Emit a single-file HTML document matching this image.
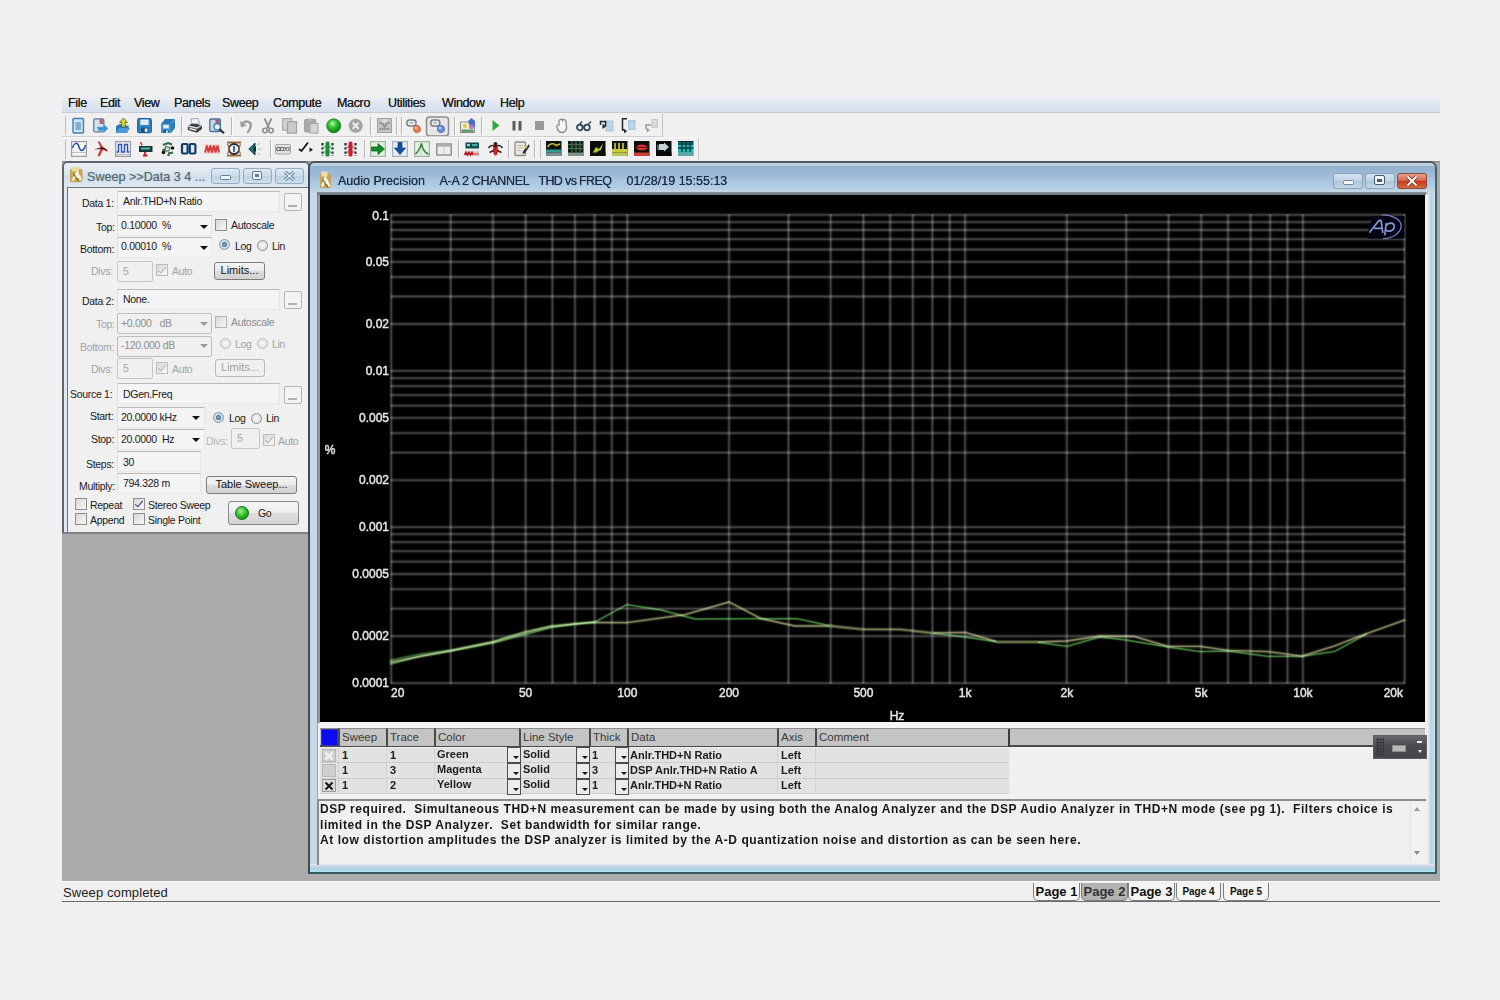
<!DOCTYPE html>
<html><head><meta charset="utf-8"><title>Audio Precision</title>
<style>
*{box-sizing:border-box;margin:0;padding:0}
html,body{width:1500px;height:1000px;overflow:hidden;background:#f0f0f0;font-family:"Liberation Sans",sans-serif;}
.a{position:absolute}
#menubar{left:62px;top:97px;width:1378px;height:16px;background:linear-gradient(#e9edf5,#dde4f0 60%,#d6deec);border-bottom:1px solid #c4cad6}
#menubar span{position:absolute;top:-0.7px;font-size:12.5px;color:#1c1c1c;line-height:14px;letter-spacing:-0.35px;text-shadow:0 0 0.6px #333}
#mdi{left:62px;top:161px;width:1378px;height:720px;background:#ababab;border-top:1px solid #8a8a8a}
.tbsep{position:absolute;width:1px;background:#b8b8b8;height:18px}
.ico{position:absolute;width:16px;height:16px}
/* sweep window */
#sw{left:62px;top:161px;width:248px;height:373px;background:#dfe8f0;border:2px solid #5e666c;border-bottom-color:#808284;border-radius:6px 6px 0 0}
#swtitle{left:0;top:0;width:244px;height:24px;border-radius:4px 4px 0 0;background:linear-gradient(#e9f0f6,#dbe6f0 45%,#d3e0ec 55%,#dce7f0)}
#swbody{left:3px;top:24px;width:241px;height:345px;background:#f0f0f0;border:0 solid #6c747a;border-width:1.5px 0 0 1.5px}
/* graph window */
#gw{left:308px;top:161px;width:1129px;height:712.5px;background:#c8d8e6;border:2px solid #3f4b56;border-top-color:#50565e;border-right-color:#466064;border-bottom-color:#325860;border-radius:7px 7px 0 0}
#gwtitle{left:0;top:0;width:1125px;height:30px;border-radius:5px 5px 0 0;background:linear-gradient(#c4d3e2 0%,#c0d0e0 8%,#93b2d0 11%,#9ab8d6 30%,#a5bdd6 50%,#a8c5e1 53%,#b4cfe6 86%,#c4d6e2 92%,#c4d6e2 100%)}
#black{left:320px;top:195px;width:1105px;height:527px;background:#000}
.lbl{position:absolute;font-size:10.5px;color:#1a1a1a;white-space:nowrap;line-height:12px;letter-spacing:-0.3px}
.dis{color:#a3a3a3}
.fld{position:absolute;background:#f4f4f4;border-top:1px solid #b9b9b9;border-left:1px solid #dedede;border-right:1px solid #e6e6e6;border-bottom:1px solid #e8e8e8}
.box{position:absolute;background:#f3f3f3;border:1px solid #b4b4b4;border-radius:2px}
.btn{position:absolute;border:1px solid #7c7c7c;border-radius:3px;background:linear-gradient(#f4f4f4,#ebebeb 48%,#dcdcdc 52%,#d2d2d2);font-size:11px;color:#111;text-align:center;white-space:nowrap}
.cb{position:absolute;width:12px;height:12px;border:1px solid #8f8f8f;background:linear-gradient(135deg,#d8d8d8,#f8f8f8)}
.rb{position:absolute;width:11px;height:11px;border:1px solid #8f8f8f;border-radius:50%;background:radial-gradient(#fafafa,#d6d6d6)}
.arr{position:absolute;width:0;height:0;border-left:4px solid transparent;border-right:4px solid transparent;border-top:4px solid #111}
#status{left:62px;top:881px;width:1378px;height:21px;background:#f0efee;border-top:1px solid #fbfbfb;border-bottom:1px solid #6c6c6c}
.tab{position:absolute;top:1px;height:18px;border:1px solid #7d7d7d;border-top:none;border-radius:0 0 5px 5px;background:#f4f4f2;font-weight:bold;color:#111;text-align:center;white-space:nowrap}
table{border-collapse:collapse}
.th{position:absolute;height:18px;background:#c4c4c4;border-left:2px solid #4a4a4a;border-top:1px solid #8c8c8c;font-size:11.5px;color:#3a3a3a;padding-left:2px;line-height:17px;white-space:nowrap}
.td{position:absolute;height:15px;font-size:11px;font-weight:bold;color:#1c1c1c;line-height:15px;white-space:nowrap;letter-spacing:0px}
.dd{position:absolute;width:14px;height:16px;border:1.5px solid #4c4c4c;background:#ececec}
.dd:after{content:"";position:absolute;left:4.5px;top:8px;border-left:3px solid transparent;border-right:3px solid transparent;border-top:3px solid #111}
</style></head><body>
<div class="a" id="menubar">
<span style="left:6px">File</span><span style="left:38px">Edit</span><span style="left:72px">View</span><span style="left:112px">Panels</span><span style="left:160px">Sweep</span><span style="left:211px">Compute</span><span style="left:275px">Macro</span><span style="left:326px">Utilities</span><span style="left:380px">Window</span><span style="left:438px">Help</span>
</div>
<!-- toolbars -->
<div class="a" id="tb1" style="left:62px;top:114px;width:600px;height:24px;border-bottom:1px solid #d4d4d4"></div>
<div class="a" id="tb2" style="left:62px;top:138px;width:660px;height:23px"></div>
<svg width="1500" height="170" style="position:absolute;left:0;top:0"><rect x="65" y="116" width="1" height="19" fill="#bdbdbd"/><rect x="65" y="140" width="1" height="19" fill="#bdbdbd"/><g transform="translate(72,118)"><rect x="1" y="0.5" width="10.5" height="14.5" rx="1" fill="#cfe3f2" stroke="#3f7fb0" stroke-width="1.4"/><rect x="3.5" y="4" width="5.5" height="8" fill="#7fb0d6"/></g><g transform="translate(93,118)"><rect x="0.8" y="0.8" width="10" height="13" rx="1" fill="#d6e4ee" stroke="#5b7f9c" stroke-width="1.3"/><rect x="6.5" y="1" width="4" height="5" fill="#b06a7a"/><path d="M4,9 L11,9 L11,6.5 L15,10.5 L11,14.5 L11,12 L6,13 Z" fill="#3b8fd0" stroke="#6fb2e2" stroke-width=".6"/></g><g transform="translate(115,118)"><path d="M1,8 L5,6 L14,8 L12,15 L1,15 Z" fill="#2f78b8"/><path d="M1,15 L4,10 L15,10 L12,15 Z" fill="#4c9ad6"/><path d="M8.5,0 L12.5,4.5 L10.3,4.5 L10.3,9 L6.7,9 L6.7,4.5 L4.5,4.5 Z" fill="#d9d62a" stroke="#55601a" stroke-width=".8"/></g><g transform="translate(137,118)"><rect x="0.7" y="0.7" width="13.6" height="14" rx="1.5" fill="#2f86c6" stroke="#1f5f96" stroke-width="1.2"/><rect x="3.3" y="1.5" width="8.4" height="5.5" fill="#dbeaf6"/><rect x="4" y="9.5" width="7.5" height="5" fill="#1d527f"/><rect x="7.8" y="10.5" width="2.6" height="3.4" fill="#e8f2fa"/></g><g transform="translate(160,118)"><path d="M1,6 L5,1 L15,1 L15,10 L11,15 L1,15 Z" fill="#2a78b4"/><path d="M1,6 L11,6 L11,15 L1,15 Z" fill="#3f93d0"/><rect x="3.2" y="6.8" width="5.6" height="3.6" fill="#dcebf6"/><rect x="3.5" y="12" width="5" height="3" fill="#1d527f"/><rect x="6" y="12.6" width="1.8" height="2.2" fill="#e8f2fa"/><path d="M11,6 L15,1" stroke="#8cc0e6" stroke-width=".8"/></g><rect x="181" y="117" width="1" height="18" fill="#b4b4b4"/><rect x="182" y="117" width="1" height="18" fill="#fbfbfb"/><g transform="translate(187,118)"><path d="M4,1 L11,0.5 L12.5,5 L5,6.5 Z" fill="#eef4f8" stroke="#7f9db5" stroke-width=".8"/><path d="M0.8,8 L5,5.5 L15,7 L15,11 L10,14.8 L0.8,12 Z" fill="#3a3d40"/><path d="M0.8,8 L10,10 L15,7" stroke="#d9dde0" stroke-width="1.3" fill="none"/><path d="M2.5,10.5 L9.5,12.3" stroke="#e8e8e8" stroke-width="1.6"/></g><g transform="translate(209,118)"><rect x="0.8" y="1" width="10.5" height="12.5" rx="1" fill="#c3d8e8" stroke="#41729a" stroke-width="1.3"/><rect x="6.5" y="1.5" width="4" height="4.5" fill="#a65a78"/><circle cx="8.2" cy="8.8" r="3.2" fill="#e4f2fb" stroke="#3a6f9c" stroke-width="1.2"/><path d="M10.5,11.2 L15,15.3" stroke="#2b2b33" stroke-width="2.2"/></g><rect x="231" y="117" width="1" height="18" fill="#b4b4b4"/><rect x="232" y="117" width="1" height="18" fill="#fbfbfb"/><g transform="translate(240,118)"><path d="M2,6.5 C5,1.5 12,3 10.5,9 C10,11.5 8.5,13.5 7,14.5" fill="none" stroke="#9c9c9c" stroke-width="2.4"/><path d="M0,3 L1,9.5 L7,7.5 Z" fill="#9c9c9c"/></g><g transform="translate(261,118)"><path d="M3.5,0.5 L8,10 M10.5,0.5 L6,10" stroke="#8f8f8f" stroke-width="1.8"/><circle cx="4" cy="12.5" r="2.2" fill="none" stroke="#8f8f8f" stroke-width="1.6"/><circle cx="10" cy="12.5" r="2.2" fill="none" stroke="#8f8f8f" stroke-width="1.6"/></g><g transform="translate(282,118)"><rect x="0.7" y="0.7" width="9" height="11.5" fill="#d2d2d2" stroke="#a9a9a9" stroke-width="1.2"/><rect x="5.5" y="3.7" width="9" height="11.5" fill="#c9c9c9" stroke="#a2a2a2" stroke-width="1.2"/></g><g transform="translate(304,118)"><rect x="0.7" y="1.5" width="11" height="12.5" rx="1" fill="#a9a9a9" stroke="#999" stroke-width="1"/><rect x="3.5" y="0.3" width="5" height="3" fill="#bdbdbd"/><rect x="6" y="5.5" width="8" height="9.7" fill="#d4d4d4" stroke="#a5a5a5" stroke-width="1"/></g><defs><radialGradient id="gb" cx="42%" cy="35%" r="65%"><stop offset="0" stop-color="#b4f7a2"/><stop offset=".45" stop-color="#2fc32f"/><stop offset="1" stop-color="#0b7d14"/></radialGradient></defs><circle cx="333.7" cy="125.8" r="7" fill="url(#gb)" stroke="#187a1c" stroke-width=".8"/><circle cx="355.7" cy="125.8" r="7" fill="#a3a3a3"/><path d="M352.7,122.8 L358.7,128.8 M358.7,122.8 L352.7,128.8" stroke="#ececec" stroke-width="2"/><rect x="370" y="117" width="1" height="18" fill="#b4b4b4"/><rect x="371" y="117" width="1" height="18" fill="#fbfbfb"/><g transform="translate(377,118)"><rect x="0.5" y="0.5" width="14" height="14" fill="#c4c4c4" stroke="#a2a2a2"/><path d="M2,5 L5,5 L7.5,9 L10,5 L13,5 M2,11 L13,11" stroke="#8e8e8e" stroke-width="1.6" fill="none"/><rect x="5" y="1.5" width="5" height="3" fill="#dcdcdc"/></g><rect x="396" y="117" width="1" height="18" fill="#b4b4b4"/><rect x="397" y="117" width="1" height="18" fill="#fbfbfb"/><rect x="401" y="117" width="1" height="18" fill="#b4b4b4"/><rect x="402" y="117" width="1" height="18" fill="#fbfbfb"/><g transform="translate(406,118)"><rect x="1" y="2" width="9" height="6" rx="2.5" fill="#eeeeee" stroke="#777f85" stroke-width="1.5"/><rect x="3.5" y="4" width="4" height="1.6" fill="#a9b2b8"/><circle cx="11" cy="11" r="3.6" fill="#e0805a" stroke="#b85c3c" stroke-width=".8"/><circle cx="10" cy="10" r="1.2" fill="#f6c0a6"/></g><rect x="426.5" y="117" width="22" height="19" rx="3" fill="#e6e6e6" stroke="#8c8c8c" stroke-width="1.5"/><g transform="translate(430,119)"><rect x="0.8" y="1" width="9" height="6" rx="2.5" fill="#eeeeee" stroke="#777f85" stroke-width="1.5"/><rect x="3.2" y="3" width="4" height="1.6" fill="#a9b2b8"/><circle cx="11" cy="10" r="3.6" fill="#6a8fe0" stroke="#4465b4" stroke-width=".8"/><circle cx="10" cy="9" r="1.2" fill="#c5d5f8"/></g><rect x="454" y="117" width="1" height="18" fill="#b4b4b4"/><rect x="455" y="117" width="1" height="18" fill="#fbfbfb"/><g transform="translate(460,118)"><rect x="0.5" y="4" width="14" height="10.5" fill="#f1ead0" stroke="#8d8f86" stroke-width="1"/><rect x="1.5" y="11.5" width="12" height="2.5" fill="#5aa06a"/><circle cx="5" cy="8" r="2" fill="#e2c64a"/><path d="M8,3 L11.5,0 L15,3 L15,9 L10,9 Z" fill="#4a6fd0"/><circle cx="11.5" cy="9" r="2.4" fill="#b878c8"/></g><rect x="481" y="117" width="1" height="18" fill="#b4b4b4"/><rect x="482" y="117" width="1" height="18" fill="#fbfbfb"/><path d="M492.5,120 L499.5,125.5 L492.5,131 Z" fill="#35a83a"/><rect x="512.5" y="121" width="3" height="9.5" fill="#5a5a5a"/><rect x="518.5" y="121" width="3" height="9.5" fill="#5a5a5a"/><rect x="535" y="121" width="9" height="9" fill="#989898"/><g transform="translate(556,118)"><path d="M3,7 L3,3.5 C3,1 6,0.5 6.5,2.5 C7.5,0.5 10,1.5 10,4 L10.5,8 C11,11 9.5,14.5 6.5,14.5 C3.5,14.5 1.5,12.5 0.8,9 C0.5,7.5 2,6.5 3,7 Z" fill="#f4f4f4" stroke="#8c8c8c" stroke-width="1.3"/></g><g transform="translate(576,118)"><circle cx="3.8" cy="9.5" r="2.8" fill="none" stroke="#2d4a5a" stroke-width="1.8"/><circle cx="11" cy="9.5" r="2.8" fill="none" stroke="#2d4a5a" stroke-width="1.8"/><path d="M6,8.5 L9,8.5 M3,7 L6,3.5 M11.5,7 L15,3.5" stroke="#2d4a5a" stroke-width="1.4"/></g><g transform="translate(599,118)"><rect x="7" y="3" width="7" height="10" fill="#b9d6e8" stroke="#9dc0d6" stroke-width=".8"/><path d="M6.5,8 L6.5,3.5 L1.5,3.5 L1.5,7" fill="none" stroke="#1f2630" stroke-width="1.5"/><path d="M3.5,5.5 L7,8.5 L3.5,11 Z" fill="#1f2630"/></g><g transform="translate(621,118)"><rect x="7.5" y="2.5" width="6.5" height="9" fill="#b9d6e8" stroke="#9dc0d6" stroke-width=".8"/><path d="M6,0.8 L1.5,0.8 L1.5,12 L3,12" fill="none" stroke="#1f2630" stroke-width="1.5"/><path d="M2.5,10.5 L6,13 L3.5,15.5 Z" fill="#1f2630"/></g><g transform="translate(644,118)"><rect x="8" y="1.5" width="5.5" height="8" fill="#d9d9d9" stroke="#c0c0c0" stroke-width=".8"/><path d="M7.5,7 L2,7 L2,11" fill="none" stroke="#9a9a9a" stroke-width="1.5"/><path d="M2,9.5 L6,12 L3,14.5 Z" fill="#9a9a9a"/></g><rect x="662" y="114" width="1" height="23" fill="#c4c4c4"/><rect x="62" y="136" width="600" height="1" fill="#cfcfcf"/><rect x="62" y="137" width="637" height="1" fill="#fafafa"/><g transform="translate(71,141)"><rect x="0.6" y="0.6" width="14.8" height="14.8" fill="#f6f6f6" stroke="#9c9c9c" stroke-width="1.2"/><path d="M1.5,7 C3.5,1 6.5,1 8,6 C9.5,11 12.5,11 14.5,4" fill="none" stroke="#1f4fa8" stroke-width="1.5"/><path d="M1,11.5 L15,11.5" stroke="#bdbdbd"/></g><g transform="translate(93,141)"><path d="M4.5,0.5 L8,7 L4.5,15 L6.5,15.5 L10,8.5 L14.5,11 L14,8.5 L9.5,5.5 L6.5,0.5 Z" fill="#d92a36"/><path d="M1,8.5 L9,6 L15,9.5 L8,8 Z" fill="#3a2024"/></g><g transform="translate(115,141)"><rect x="0.6" y="0.6" width="14.8" height="14.8" fill="#f1f1f4" stroke="#9c9ca4" stroke-width="1.2"/><path d="M1.5,11 L3.5,11 L3.5,3.5 L6.5,3.5 L6.5,11 L9.5,11 L9.5,3.5 L12.5,3.5 L12.5,11 L14.5,11" fill="none" stroke="#2a4fb0" stroke-width="1.4"/><path d="M1,13.5 L15,13.5" stroke="#b4b4c0"/></g><g transform="translate(138,141)"><rect x="1" y="5" width="13.5" height="6" fill="#0f3c3a"/><rect x="3" y="6.5" width="9" height="2" fill="#5ab8a8"/><path d="M2.5,1 L4,4.5" stroke="#c22" stroke-width="1.4"/><path d="M7,11 L7,15 M5,14.5 L9.5,14.5" stroke="#c41c2c" stroke-width="1.8"/></g><g transform="translate(160,141)"><path d="M3,4 L8,2 L12,3.5 M2.5,9.5 L6,8 M8,12.5 L13,11.5" stroke="#2c6a40" stroke-width="2" fill="none"/><circle cx="3.5" cy="11.5" r="1.8" fill="#111"/><circle cx="12.5" cy="7" r="1.8" fill="#111"/><path d="M5.5,5.5 L10,6.5 L9,10 L5,10 Z" fill="#d9eadf" stroke="#2c6a40" stroke-width="1"/><circle cx="8.5" cy="14" r="1.3" fill="#3d7f52"/></g><g transform="translate(181,141)"><rect x="1" y="3" width="5.6" height="9.5" rx="1" fill="#dfe9f2" stroke="#123f6a" stroke-width="2.2"/><rect x="8.8" y="3" width="5.6" height="9.5" rx="1" fill="#dfe9f2" stroke="#123f6a" stroke-width="2.2"/></g><g transform="translate(204,141)"><rect x="0.5" y="3" width="15" height="10" fill="#f3d4d4"/><path d="M1,11.5 L3,4.5 L4.5,11.5 L6.5,4.5 L8,11.5 L10,4.5 L11.5,11.5 L13.5,4.5 L15,11.5" fill="none" stroke="#d83a3e" stroke-width="1.9"/></g><g transform="translate(226,141)"><path d="M1,1.5 L15,1.5 M1,14.5 L15,14.5" stroke="#9a6a3a" stroke-width="1.8"/><circle cx="8" cy="8" r="5" fill="#f4f4f4" stroke="#2a2a33" stroke-width="1.8"/><path d="M8,5 L8,11" stroke="#2a5ab8" stroke-width="1.8"/><path d="M1.5,3 L3.5,8 L1.5,13 M14.5,3 L12.5,8 L14.5,13" stroke="#9a6a3a" stroke-width="1.2" fill="none"/></g><g transform="translate(248,141)"><path d="M0.8,8 L7,2 L7,14 Z" fill="#1f7a78" stroke="#15403f" stroke-width="1"/><rect x="5.5" y="5.5" width="2.5" height="5" fill="#0f2f2e"/><path d="M9.5,4 L12,2 M9.8,8 L13.5,8 M9.5,12 L12,14" stroke="#c8c8c8" stroke-width="1.3"/></g><rect x="270" y="140" width="1" height="18" fill="#b4b4b4"/><rect x="271" y="140" width="1" height="18" fill="#fbfbfb"/><g transform="translate(275,141)"><rect x="0.5" y="3.5" width="15" height="9.5" rx="1.5" fill="#e4e4e4" stroke="#a4a4a4" stroke-width="1"/><circle cx="3.5" cy="8" r="1.8" fill="none" stroke="#666" stroke-width="1.1"/><circle cx="7" cy="8" r="1.8" fill="none" stroke="#666" stroke-width="1.1"/><path d="M9.5,6 L12.5,10 M12.5,6 L9.5,10 M14,6 L14,10" stroke="#666" stroke-width="1.1"/></g><g transform="translate(298,141)"><path d="M1,8 L3.5,10 L10,1.5" fill="none" stroke="#1c1c1c" stroke-width="1.9"/><path d="M11.5,6.5 L15,8.8 L11.5,11 Z" fill="#1c1c1c"/></g><g transform="translate(320,141)"><rect x="5.5" y="0.5" width="4" height="15" rx="1.5" fill="#1f8a3a"/><path d="M2.5,2 L2.5,15 M12.5,2 L12.5,15" stroke="#16442a" stroke-width="2.2" stroke-dasharray="2.4 1.8"/><path d="M4,6 L11,6 M4,11 L11,11" stroke="#1f8a3a" stroke-width="1.2"/></g><g transform="translate(343,141)"><rect x="5.5" y="0.5" width="4" height="15" rx="1.5" fill="#cc1f2f"/><path d="M2.5,2 L2.5,15 M12.5,2 L12.5,15" stroke="#2c2c2c" stroke-width="2.2" stroke-dasharray="2.4 1.8"/><path d="M4,6 L11,6 M4,11 L11,11" stroke="#cc1f2f" stroke-width="1.2"/></g><rect x="364" y="140" width="1" height="18" fill="#b4b4b4"/><rect x="365" y="140" width="1" height="18" fill="#fbfbfb"/><g transform="translate(370,141)"><rect x="0.6" y="0.6" width="14.8" height="14.8" fill="#e2f0e2" stroke="#a9b4a9" stroke-width="1.2"/><path d="M1.5,6 L8,6 L8,2.5 L14.5,8 L8,13.5 L8,10 L1.5,10 Z" fill="#128a2c" stroke="#0c5a1c" stroke-width=".7"/></g><g transform="translate(392,141)"><rect x="0.6" y="0.6" width="14.8" height="14.8" fill="#e6eef6" stroke="#a9b0ba" stroke-width="1.2"/><path d="M6,1.5 L10,1.5 L10,7 L13.5,7 L8,13.5 L2.5,7 L6,7 Z" fill="#16509e" stroke="#0c346c" stroke-width=".7"/></g><g transform="translate(414,141)"><rect x="0.6" y="0.6" width="14.8" height="14.8" fill="#e4f1e2" stroke="#a4b0a4" stroke-width="1.2"/><path d="M7,1 L7,15" stroke="#bcd4bc"/><path d="M1.5,13 C5,10 6.5,6 7.5,2.5 C8.5,8 11,12 14.5,13" fill="none" stroke="#3f7f4a" stroke-width="1.5"/></g><g transform="translate(436,141)"><rect x="0.8" y="3" width="14.4" height="11" fill="#ededed" stroke="#8c8c8c" stroke-width="1.4"/><rect x="1.5" y="3.5" width="13" height="2.2" fill="#b0b0b0"/><path d="M8,6 L8,13.5" stroke="#c8c8c8"/></g><rect x="458" y="140" width="1" height="18" fill="#b4b4b4"/><rect x="459" y="140" width="1" height="18" fill="#fbfbfb"/><g transform="translate(464,141)"><rect x="1.5" y="1.5" width="13.5" height="6" fill="#0f4a4c"/><rect x="3" y="3" width="3" height="2.2" fill="#8fd8d0"/><rect x="8" y="3" width="5.5" height="2.2" fill="#48a8a0"/><rect x="0.5" y="9.5" width="15" height="1.6" fill="#d8d8d8"/><path d="M0.5,14 L2,11.5 L3.5,14 L5,11.5 L6.5,14 L8,11.5 L9.5,14" stroke="#b8141c" stroke-width="1.7" fill="none"/><rect x="10" y="11.5" width="5" height="3" fill="#d08a8a"/></g><g transform="translate(488,141)"><ellipse cx="7.5" cy="9" rx="2.6" ry="5.5" fill="#d4202c"/><circle cx="7.5" cy="3" r="2" fill="#3a1c1c"/><path d="M0.5,7 C3,3.5 5,4 7.5,6 C10,4 12,3.5 14.5,7 M1.5,11.5 L5.5,9.5 M13.5,11.5 L9.5,9.5" fill="none" stroke="#3a1c1c" stroke-width="1.4"/></g><rect x="508" y="140" width="1" height="18" fill="#b4b4b4"/><rect x="509" y="140" width="1" height="18" fill="#fbfbfb"/><g transform="translate(514,141)"><rect x="1" y="1" width="10.5" height="13.5" rx="1" fill="#e9e9df" stroke="#8c8c84" stroke-width="1.3"/><path d="M3,4.5 L9,4.5 M3,7 L9,7 M3,9.5 L7,9.5" stroke="#b9b9ae" stroke-width="1"/><path d="M15,3 L9,10.5 L8.5,13 L11,12 L15.5,5.5 Z" fill="#2a2a2a"/><path d="M10,5 L13,7" stroke="#d8d04a" stroke-width="1.5"/></g><rect x="534" y="140" width="1" height="18" fill="#b4b4b4"/><rect x="535" y="140" width="1" height="18" fill="#fbfbfb"/><rect x="540" y="140" width="1" height="19" fill="#bdbdbd"/><g transform="translate(546,141)"><rect x="0" y="0" width="15.5" height="15" fill="#0d1410"/><path d="M1.5,6 C4,2 8,2 10,4.5 L14,3" stroke="#c9b83a" stroke-width="1.6" fill="none"/><rect x="0" y="8.5" width="15.5" height="3" fill="#2f9a90"/><rect x="0" y="11.5" width="15.5" height="3.5" fill="#7d8d92"/></g><g transform="translate(568,141)"><rect x="0" y="0" width="15.5" height="15" fill="#101a12"/><path d="M0,3.5 L15.5,3.5 M0,7.5 L15.5,7.5 M4,0 L4,11 M8,0 L8,11 M12,0 L12,11" stroke="#3f6a48" stroke-width="1.3"/><rect x="0" y="11.5" width="15.5" height="3.5" fill="#7d9486"/></g><g transform="translate(590,141)"><rect x="0" y="0" width="15.5" height="15" fill="#0b0b08"/><path d="M2,13 L6,6 L9,8 L13,2.5 L11,9 L8,10 L6,14 Z" fill="#b5c43a"/><rect x="0" y="11.5" width="15.5" height="3.5" fill="#111108"/></g><g transform="translate(612,141)"><rect x="0" y="0" width="15.5" height="15" fill="#14140a"/><path d="M3,2 L3,8 M7,2 L7,8 M11,2 L11,8" stroke="#d8d23a" stroke-width="1.6"/><rect x="0" y="8" width="15.5" height="3.5" fill="#c8cc3c"/><rect x="0" y="11.5" width="15.5" height="3.5" fill="#b9c65a"/></g><g transform="translate(634,141)"><rect x="0" y="0" width="15.5" height="15" fill="#160c08"/><ellipse cx="7.8" cy="6.5" rx="5.5" ry="3" fill="#d4342c"/><path d="M2,6.5 L13.5,6.5" stroke="#5a1410" stroke-width="1"/><rect x="0" y="11.5" width="15.5" height="3.5" fill="#c8403a"/></g><g transform="translate(656,141)"><rect x="0" y="0" width="15.5" height="15" fill="#070b0d"/><path d="M3,3 L8,3 L8,1.5 L13,6 L8,10.5 L8,9 L3,9 Z" fill="#c6d0d2"/><path d="M2,4 L2,9" stroke="#5f8a8a" stroke-width="1.5"/><rect x="0" y="11.5" width="15.5" height="3.5" fill="#070b0d"/></g><g transform="translate(678,141)"><rect x="0" y="0" width="15.5" height="15" fill="#1fb8b4"/><path d="M0,3 L15.5,3 M0,7 L15.5,7 M4,0 L4,11 M8,0 L8,11 M12,0 L12,11" stroke="#0a3a3c" stroke-width="1.4"/><rect x="0" y="0" width="15.5" height="1.5" fill="#0a2a2c"/><rect x="0" y="11.5" width="15.5" height="3.5" fill="#62a8a8"/></g><rect x="698" y="138" width="1" height="22" fill="#c8c8c8"/></svg>
<div class="a" id="mdi"></div>
<!-- sweep window -->
<div class="a" id="sw"><div class="a" id="swtitle"></div><div class="a" id="swbody"></div></div>
<!-- sweep title -->
<svg class="a" style="left:69px;top:166px" width="14.5" height="18" viewBox="0 0 16 20"><rect x="1" y="3" width="14" height="15" rx="2" fill="#c9a85a"/><rect x="3" y="1" width="8" height="5" fill="#e9d9a0"/><path d="M4,16 L9,7 L13,16 M7,12 L13,12" stroke="#fffbe8" stroke-width="2.2" fill="none"/><path d="M5,9 L11,17" stroke="#7a5a22" stroke-width="1.2"/></svg>
<span class="a" style="left:87px;top:169.7px;font-size:12.6px;color:#55656e;letter-spacing:0px;white-space:nowrap;text-shadow:0 0 1px #8aa">Sweep &gt;&gt;Data 3 4 ...</span>
<div class="a wb" style="left:211px;top:168px;width:29px;height:16px"></div>
<div class="a wb" style="left:243px;top:168px;width:29px;height:16px"></div>
<div class="a wb" style="left:275px;top:168px;width:29px;height:16px"></div>
<div class="a" style="left:220px;top:175px;width:11px;height:5px;border:1.5px solid #5f7f95;border-radius:1.5px;background:#eef4f8"></div>
<div class="a" style="left:252px;top:171px;width:10px;height:9px;border:1.5px solid #5f7f95;border-radius:2px;background:#eef4f8"></div>
<div class="a" style="left:255px;top:174px;width:4px;height:3px;background:#5f7f95"></div>
<svg class="a" style="left:283px;top:170px" width="13" height="12"><path d="M2,2 L11,10 M11,2 L2,10" stroke="#5f7f95" stroke-width="3.2"/><path d="M2,2 L11,10 M11,2 L2,10" stroke="#eef4f8" stroke-width="1.2"/></svg>
<style>.wb{border:1px solid #93adc2;border-radius:3px;background:linear-gradient(#dfeaf4,#c9dbea 50%,#bdd2e4 52%,#cfdfec)}</style>

<!-- Data 1 -->
<span class="lbl" style="left:82px;top:197px">Data 1:</span>
<div class="fld" style="left:117px;top:191px;width:163px;height:21px"></div>
<span class="lbl" style="left:123px;top:195px">Anlr.THD+N Ratio</span>
<div class="box" style="left:284px;top:193px;width:18px;height:18px"></div><div class="a" style="left:288px;top:205px;width:9px;height:2px;background:#b0b0b0"></div>
<span class="lbl" style="left:96px;top:221px">Top:</span>
<div class="fld" style="left:117px;top:215px;width:95px;height:21px"></div>
<span class="lbl" style="left:121px;top:219px">0.10000&nbsp; %</span><div class="arr" style="left:200px;top:225px"></div>
<div class="cb" style="left:215px;top:219px"></div><span class="lbl" style="left:231px;top:219px">Autoscale</span>
<span class="lbl" style="left:80px;top:243px">Bottom:</span>
<div class="fld" style="left:117px;top:237px;width:95px;height:21px"></div>
<span class="lbl" style="left:121px;top:240px">0.00010&nbsp; %</span><div class="arr" style="left:200px;top:246px"></div>
<div class="rb on" style="left:219px;top:239px"></div><span class="lbl" style="left:235px;top:240px">Log</span>
<div class="rb" style="left:257px;top:240px"></div><span class="lbl" style="left:272px;top:240px">Lin</span>
<span class="lbl dis" style="left:91px;top:265px">Divs:</span>
<div class="box" style="left:117px;top:261px;width:36px;height:21px;background:#f0f0f0;border-color:#c6c6c6"></div><span class="lbl dis" style="left:123px;top:265px">5</span>
<div class="cb ck disc" style="left:156px;top:264px"></div><span class="lbl dis" style="left:172px;top:265px">Auto</span>
<div class="btn" style="left:214px;top:262px;width:51px;height:18px;line-height:15px">Limits...</div>
<!-- Data 2 -->
<span class="lbl" style="left:82px;top:295px">Data 2:</span>
<div class="fld" style="left:117px;top:289px;width:163px;height:21px"></div>
<span class="lbl" style="left:123px;top:293px">None.</span>
<div class="box" style="left:284px;top:291px;width:18px;height:18px"></div><div class="a" style="left:288px;top:303px;width:9px;height:2px;background:#b0b0b0"></div>
<span class="lbl dis" style="left:96px;top:318px">Top:</span>
<div class="box" style="left:117px;top:313px;width:95px;height:21px;background:#f0f0f0;border-color:#bdbdbd"></div>
<span class="lbl dis" style="left:121px;top:317px;color:#8e8e8e">+0.000&nbsp;&nbsp; dB</span><div class="arr" style="left:200px;top:322px;border-top-color:#9a9a9a"></div>
<div class="cb" style="left:215px;top:316px;border-color:#b5b5b5"></div><span class="lbl dis" style="left:231px;top:316px;color:#8e8e8e">Autoscale</span>
<span class="lbl dis" style="left:80px;top:341px">Bottom:</span>
<div class="box" style="left:117px;top:336px;width:95px;height:21px;background:#f0f0f0;border-color:#bdbdbd"></div>
<span class="lbl dis" style="left:121px;top:339px;color:#8e8e8e">-120.000 dB</span><div class="arr" style="left:200px;top:344px;border-top-color:#9a9a9a"></div>
<div class="rb" style="left:220px;top:338px;border-color:#bdbdbd"></div><span class="lbl dis" style="left:235px;top:338px">Log</span>
<div class="rb" style="left:257px;top:338px;border-color:#bdbdbd"></div><span class="lbl dis" style="left:272px;top:338px">Lin</span>
<span class="lbl dis" style="left:91px;top:363px">Divs:</span>
<div class="box" style="left:117px;top:358px;width:36px;height:21px;background:#f0f0f0;border-color:#c6c6c6"></div><span class="lbl dis" style="left:123px;top:362px">5</span>
<div class="cb ck disc" style="left:156px;top:362px"></div><span class="lbl dis" style="left:172px;top:363px">Auto</span>
<div class="btn" style="left:215px;top:359px;width:50px;height:18px;line-height:15px;color:#a0a0a0;border-color:#b9b9b9;background:#f0f0f0">Limits...</div>
<!-- Source 1 -->
<span class="lbl" style="left:70px;top:388px">Source 1:</span>
<div class="fld" style="left:117px;top:383px;width:163px;height:21px"></div>
<span class="lbl" style="left:123px;top:388px">DGen.Freq</span>
<div class="box" style="left:284px;top:386px;width:18px;height:18px"></div><div class="a" style="left:288px;top:398px;width:9px;height:2px;background:#b0b0b0"></div>
<span class="lbl" style="left:90px;top:410px">Start:</span>
<div class="fld" style="left:117px;top:407px;width:88px;height:21px"></div>
<span class="lbl" style="left:121px;top:411px">20.0000 kHz</span><div class="arr" style="left:192px;top:416px"></div>
<div class="rb on" style="left:213px;top:412px"></div><span class="lbl" style="left:229px;top:412px">Log</span>
<div class="rb" style="left:251px;top:413px"></div><span class="lbl" style="left:266px;top:412px">Lin</span>
<span class="lbl" style="left:91px;top:433px">Stop:</span>
<div class="fld" style="left:117px;top:429px;width:88px;height:21px"></div>
<span class="lbl" style="left:121px;top:433px">20.0000&nbsp; Hz</span><div class="arr" style="left:192px;top:438px"></div>
<span class="lbl dis" style="left:206px;top:435px;color:#b5b5b5">Divs:</span>
<div class="box" style="left:231px;top:428px;width:29px;height:21px;background:#f0f0f0;border-color:#c6c6c6"></div><span class="lbl dis" style="left:237px;top:432px">5</span>
<div class="cb ck disc" style="left:263px;top:434px"></div><span class="lbl dis" style="left:278px;top:435px">Auto</span>
<span class="lbl" style="left:86px;top:458px">Steps:</span>
<div class="fld" style="left:117px;top:451px;width:84px;height:21px"></div>
<span class="lbl" style="left:123px;top:456px">30</span>
<span class="lbl" style="left:79px;top:480px">Multiply:</span>
<div class="fld" style="left:117px;top:473px;width:84px;height:21px"></div>
<span class="lbl" style="left:123px;top:477px">794.328 m</span>
<div class="btn" style="left:206px;top:476px;width:91px;height:18px;line-height:15px">Table Sweep...</div>
<div class="cb" style="left:75px;top:498px"></div><span class="lbl" style="left:90px;top:499px">Repeat</span>
<div class="cb ck" style="left:133px;top:498px"></div><span class="lbl" style="left:148px;top:499px">Stereo Sweep</span>
<div class="cb" style="left:75px;top:513px"></div><span class="lbl" style="left:90px;top:514px">Append</span>
<div class="cb" style="left:133px;top:513px"></div><span class="lbl" style="left:148px;top:514px">Single Point</span>
<div class="btn" style="left:228px;top:501px;width:71px;height:24px;border-color:#8a8a8a;background:linear-gradient(#f6f6f6,#ededed 48%,#dedede 52%,#d4d4d4)"></div>
<div class="a" style="left:235px;top:506px;width:14px;height:14px;border-radius:50%;background:radial-gradient(circle at 40% 35%,#9cf08a,#22b422 55%,#0c7a12);border:1px solid #1c6a1c"></div>
<span class="lbl" style="left:258px;top:507px">Go</span>
<style>
.rb.on:after{content:"";position:absolute;left:2px;top:2px;width:5px;height:5px;border-radius:50%;background:radial-gradient(#8fb6cc,#234a63)}
.rb.on{background:radial-gradient(#e8f2f8,#b8cfdc);border-color:#7f9aac}
.cb.ck:after{content:"";position:absolute;left:3px;top:0px;width:3px;height:7px;border-right:1.5px solid #2a3f78;border-bottom:1.5px solid #2a3f78;transform:rotate(40deg)}
.cb.disc{border-color:#bcbcbc}.cb.disc:after{border-color:#b0b0b0}
</style>

<!-- graph window -->
<div class="a" id="gw"><div class="a" id="gwtitle"></div>
<div class="a" style="left:1118px;top:30px;width:7px;height:679px;background:linear-gradient(90deg,#e4eaf6,#bcd0e2 45%,#c0dff0 92%)"></div><div class="a" style="left:0;top:701px;width:1125px;height:7.5px;background:linear-gradient(#e8e8f4,#c2d2e2 35%,#aed6e4 65%,#b0e2ee 92%)"></div><div class="a" style="left:7px;top:30px;width:1111px;height:671px;background:#f0f0f0;border:1px solid #9aa4ac;border-right:none;border-bottom:none"></div>
</div>
<div class="a" id="black"></div>
<svg width="1500" height="1000" style="position:absolute;left:0;top:0;will-change:transform"><g fill="none"><path d="M391.2,214.4V683.6M450.68,214.4V683.6M492.89,214.4V683.6M525.62,214.4V683.6M552.37,214.4V683.6M574.99,214.4V683.6M594.58,214.4V683.6M611.86,214.4V683.6M627.31,214.4V683.6M729.0,214.4V683.6M788.48,214.4V683.6M830.69,214.4V683.6M863.42,214.4V683.6M890.17,214.4V683.6M912.79,214.4V683.6M932.38,214.4V683.6M949.66,214.4V683.6M965.11,214.4V683.6M1066.8,214.4V683.6M1126.28,214.4V683.6M1168.49,214.4V683.6M1201.22,214.4V683.6M1227.97,214.4V683.6M1250.59,214.4V683.6M1270.18,214.4V683.6M1287.46,214.4V683.6M1302.91,214.4V683.6M1404.6,214.4V683.6" stroke="#0c0c0c" stroke-width="4.6"/><path d="M391.2,214.4V683.6M450.68,214.4V683.6M492.89,214.4V683.6M525.62,214.4V683.6M552.37,214.4V683.6M574.99,214.4V683.6M594.58,214.4V683.6M611.86,214.4V683.6M627.31,214.4V683.6M729.0,214.4V683.6M788.48,214.4V683.6M830.69,214.4V683.6M863.42,214.4V683.6M890.17,214.4V683.6M912.79,214.4V683.6M932.38,214.4V683.6M949.66,214.4V683.6M965.11,214.4V683.6M1066.8,214.4V683.6M1126.28,214.4V683.6M1168.49,214.4V683.6M1201.22,214.4V683.6M1227.97,214.4V683.6M1250.59,214.4V683.6M1270.18,214.4V683.6M1287.46,214.4V683.6M1302.91,214.4V683.6M1404.6,214.4V683.6" stroke="#242424" stroke-width="2.8"/><path d="M391.2,214.4V683.6M450.68,214.4V683.6M492.89,214.4V683.6M525.62,214.4V683.6M552.37,214.4V683.6M574.99,214.4V683.6M594.58,214.4V683.6M611.86,214.4V683.6M627.31,214.4V683.6M729.0,214.4V683.6M788.48,214.4V683.6M830.69,214.4V683.6M863.42,214.4V683.6M890.17,214.4V683.6M912.79,214.4V683.6M932.38,214.4V683.6M949.66,214.4V683.6M965.11,214.4V683.6M1066.8,214.4V683.6M1126.28,214.4V683.6M1168.49,214.4V683.6M1201.22,214.4V683.6M1227.97,214.4V683.6M1250.59,214.4V683.6M1270.18,214.4V683.6M1287.46,214.4V683.6M1302.91,214.4V683.6M1404.6,214.4V683.6" stroke="#414141" stroke-width="1.3"/></g><g fill="none" style="mix-blend-mode:screen"><path d="M390.7,214.9H1405.1M390.7,222.04H1405.1M390.7,230.02H1405.1M390.7,239.08H1405.1M390.7,249.52H1405.1M390.7,261.88H1405.1M390.7,277.01H1405.1M390.7,296.5H1405.1M390.7,323.99H1405.1M390.7,370.97H1405.1M390.7,378.11H1405.1M390.7,386.09H1405.1M390.7,395.14H1405.1M390.7,405.59H1405.1M390.7,417.95H1405.1M390.7,433.07H1405.1M390.7,452.57H1405.1M390.7,480.05H1405.1M390.7,527.03H1405.1M390.7,534.17H1405.1M390.7,542.16H1405.1M390.7,551.21H1405.1M390.7,561.66H1405.1M390.7,574.01H1405.1M390.7,589.14H1405.1M390.7,608.64H1405.1M390.7,636.12H1405.1M390.7,683.1H1405.1" stroke="#0c0c0c" stroke-width="4.6"/><path d="M390.7,214.9H1405.1M390.7,222.04H1405.1M390.7,230.02H1405.1M390.7,239.08H1405.1M390.7,249.52H1405.1M390.7,261.88H1405.1M390.7,277.01H1405.1M390.7,296.5H1405.1M390.7,323.99H1405.1M390.7,370.97H1405.1M390.7,378.11H1405.1M390.7,386.09H1405.1M390.7,395.14H1405.1M390.7,405.59H1405.1M390.7,417.95H1405.1M390.7,433.07H1405.1M390.7,452.57H1405.1M390.7,480.05H1405.1M390.7,527.03H1405.1M390.7,534.17H1405.1M390.7,542.16H1405.1M390.7,551.21H1405.1M390.7,561.66H1405.1M390.7,574.01H1405.1M390.7,589.14H1405.1M390.7,608.64H1405.1M390.7,636.12H1405.1M390.7,683.1H1405.1" stroke="#242424" stroke-width="2.8"/><path d="M390.7,214.9H1405.1M390.7,222.04H1405.1M390.7,230.02H1405.1M390.7,239.08H1405.1M390.7,249.52H1405.1M390.7,261.88H1405.1M390.7,277.01H1405.1M390.7,296.5H1405.1M390.7,323.99H1405.1M390.7,370.97H1405.1M390.7,378.11H1405.1M390.7,386.09H1405.1M390.7,395.14H1405.1M390.7,405.59H1405.1M390.7,417.95H1405.1M390.7,433.07H1405.1M390.7,452.57H1405.1M390.7,480.05H1405.1M390.7,527.03H1405.1M390.7,534.17H1405.1M390.7,542.16H1405.1M390.7,551.21H1405.1M390.7,561.66H1405.1M390.7,574.01H1405.1M390.7,589.14H1405.1M390.7,608.64H1405.1M390.7,636.12H1405.1M390.7,683.1H1405.1" stroke="#414141" stroke-width="1.3"/></g><g style="mix-blend-mode:screen"><g fill="none" stroke-linejoin="round" stroke-linecap="round" style="mix-blend-mode:screen"><polyline points="391,664 420,656 451,651 493,643 525,634.5 551,627.5 576,624 595,622 627,604.6 661,610 695,619 797,618.6 831,626" stroke="#070d06" stroke-width="4.6"/><polyline points="391,664 420,656 451,651 493,643 525,634.5 551,627.5 576,624 595,622 627,604.6 661,610 695,619 797,618.6 831,626" stroke="#172e15" stroke-width="2.7"/><polyline points="391,664 420,656 451,651 493,643 525,634.5 551,627.5 576,624 595,622 627,604.6 661,610 695,619 797,618.6 831,626" stroke="#3f7a3a" stroke-width="1.3"/></g><g fill="none" stroke-linejoin="round" stroke-linecap="round" style="mix-blend-mode:screen"><polyline points="932,633 965,637 998,642" stroke="#070d06" stroke-width="4.6"/><polyline points="932,633 965,637 998,642" stroke="#172e15" stroke-width="2.7"/><polyline points="932,633 965,637 998,642" stroke="#3f7a3a" stroke-width="1.3"/></g><g fill="none" stroke-linejoin="round" stroke-linecap="round" style="mix-blend-mode:screen"><polyline points="1036,642 1067,646.4 1100,637 1126,640 1168,647 1200,651.6 1228,651 1268,656.4 1302,656.4 1334.8,651.4 1352.4,641.8 1366,634.2" stroke="#070d06" stroke-width="4.6"/><polyline points="1036,642 1067,646.4 1100,637 1126,640 1168,647 1200,651.6 1228,651 1268,656.4 1302,656.4 1334.8,651.4 1352.4,641.8 1366,634.2" stroke="#172e15" stroke-width="2.7"/><polyline points="1036,642 1067,646.4 1100,637 1126,640 1168,647 1200,651.6 1228,651 1268,656.4 1302,656.4 1334.8,651.4 1352.4,641.8 1366,634.2" stroke="#3f7a3a" stroke-width="1.3"/></g><g fill="none" stroke-linejoin="round" stroke-linecap="round" style="mix-blend-mode:screen"><polyline points="391,660 420,654 451,650 493,641.5 525,631.5 551,626 576,623.5 595,622" stroke="#050b05" stroke-width="4.0"/><polyline points="391,660 420,654 451,650 493,641.5 525,631.5 551,626 576,623.5 595,622" stroke="#162e14" stroke-width="2.6"/><polyline points="391,660 420,654 451,650 493,641.5 525,631.5 551,626 576,623.5 595,622" stroke="#30602a" stroke-width="1.2"/></g><g fill="none" stroke-linejoin="round" stroke-linecap="round" style="mix-blend-mode:screen"><polyline points="391,662 451,650.7 493,642 525,632.5 551,626.4 576,623.8 595,622.3 627,622.6 685,614.6 729,602 761,618.6 795,626 831,626 863,629.4 900,629.4 932,633 965,632.4 998,642 1036,642 1067,641 1100,636 1134,636.4 1168,646.4 1200,646.4 1228,650.4 1268,651.6 1302,656.2 1334,646.2 1366,633.8 1404.4,620.2" stroke="#13130e" stroke-width="4.6"/><polyline points="391,662 451,650.7 493,642 525,632.5 551,626.4 576,623.8 595,622.3 627,622.6 685,614.6 729,602 761,618.6 795,626 831,626 863,629.4 900,629.4 932,633 965,632.4 998,642 1036,642 1067,641 1100,636 1134,636.4 1168,646.4 1200,646.4 1228,650.4 1268,651.6 1302,656.2 1334,646.2 1366,633.8 1404.4,620.2" stroke="#383828" stroke-width="2.8"/><polyline points="391,662 451,650.7 493,642 525,632.5 551,626.4 576,623.8 595,622.3 627,622.6 685,614.6 729,602 761,618.6 795,626 831,626 863,629.4 900,629.4 932,633 965,632.4 998,642 1036,642 1067,641 1100,636 1134,636.4 1168,646.4 1200,646.4 1228,650.4 1268,651.6 1302,656.2 1334,646.2 1366,633.8 1404.4,620.2" stroke="#82825e" stroke-width="1.35"/></g><g fill="none" stroke-linejoin="round" stroke-linecap="round" style="mix-blend-mode:normal"><polyline points="831,626 863,629.4 900,629.4 932,633" stroke="#3e462c" stroke-width="2.9"/><polyline points="831,626 863,629.4 900,629.4 932,633" stroke="#707c52" stroke-width="1.4"/></g><g fill="none" stroke-linejoin="round" stroke-linecap="round" style="mix-blend-mode:normal"><polyline points="998,642 1036,642" stroke="#3e462c" stroke-width="2.9"/><polyline points="998,642 1036,642" stroke="#707c52" stroke-width="1.4"/></g></g><g fill="#e6e6e6" font-family="Liberation Sans, sans-serif" font-size="12px" stroke="#e6e6e6" stroke-width="0.45"><text x="389" y="219.9" text-anchor="end">0.1</text><text x="389" y="266.2" text-anchor="end">0.05</text><text x="389" y="328.3" text-anchor="end">0.02</text><text x="389" y="375.3" text-anchor="end">0.01</text><text x="389" y="422.2" text-anchor="end">0.005</text><text x="389" y="484.4" text-anchor="end">0.002</text><text x="389" y="531.3" text-anchor="end">0.001</text><text x="389" y="578.3" text-anchor="end">0.0005</text><text x="389" y="640.4" text-anchor="end">0.0002</text><text x="389" y="687.4" text-anchor="end">0.0001</text><text x="391.0" y="697" text-anchor="start">20</text><text x="525.6" y="697" text-anchor="middle">50</text><text x="627.3" y="697" text-anchor="middle">100</text><text x="729.0" y="697" text-anchor="middle">200</text><text x="863.4" y="697" text-anchor="middle">500</text><text x="965.1" y="697" text-anchor="middle">1k</text><text x="1066.8" y="697" text-anchor="middle">2k</text><text x="1201.2" y="697" text-anchor="middle">5k</text><text x="1302.9" y="697" text-anchor="middle">10k</text><text x="1403.0" y="697" text-anchor="end">20k</text><text x="897" y="720" text-anchor="middle">Hz</text><text x="330" y="454" text-anchor="middle">%</text></g><g transform="translate(1350,205) scale(0.04673)" fill="none" stroke-linecap="round" stroke-linejoin="round">
<path d="M520,235 L1165,235 L1165,718 L395,718 L395,470 Z" fill="#010114" stroke="none"/>
<path d="M690,212 C900,215 1090,300 1095,440 C1100,580 930,715 715,718" stroke="#747eb8" stroke-width="28"/>
<path d="M425,578 L615,335 L665,330 L700,585 M530,500 L690,500" stroke="#8c98d4" stroke-width="36"/>
<path d="M775,395 L745,635 M772,440 C820,370 930,370 945,440 C960,520 880,575 800,555 C780,550 768,535 765,520" stroke="#8c98d4" stroke-width="35"/>
</g></svg>
<!-- graph title -->
<svg class="a" style="left:319px;top:171px" width="14" height="19" viewBox="0 0 14 19"><rect x="1" y="3" width="11" height="14" rx="1.5" fill="#c4a35c"/><rect x="2.5" y="0.5" width="6" height="5" fill="#ecdca0"/><path d="M3,15.5 L6.5,7 L10.5,15.5 M5,12 L10,12" stroke="#fffbe8" stroke-width="2" fill="none"/><path d="M3.5,8.5 L9,16.5" stroke="#7a5a22" stroke-width="1.1"/></svg>
<span class="a gt" style="left:338px">Audio Precision</span>
<span class="a gt" style="left:439.5px;letter-spacing:-0.3px">A-A 2 CHANNEL</span>
<span class="a gt" style="left:538.5px;letter-spacing:-0.65px">THD vs FREQ</span>
<span class="a gt" style="left:626.5px">01/28/19 15:55:13</span>
<style>.gt{top:174px;font-size:12.5px;color:#1d2b42;white-space:nowrap;line-height:15px;text-shadow:0 0 0.7px #2a3a55}</style>
<div class="a gb" style="left:1333px;top:173px;width:30px;height:16px"></div>
<div class="a gb" style="left:1365px;top:173px;width:30px;height:16px"></div>
<div class="a" style="left:1397px;top:173px;width:30px;height:16px;border:1px solid #8e4636;border-radius:3px;background:linear-gradient(#e9a28f,#d9694c 45%,#c4391c 52%,#d96a3c)"></div>
<div class="a" style="left:1343px;top:180px;width:11px;height:5px;border:1.5px solid #6f8799;border-radius:1.5px;background:#f2f6fa"></div>
<div class="a" style="left:1374px;top:175px;width:11px;height:10px;border:1.5px solid #4a5a66;border-radius:2px;background:#f2f6fa"></div>
<div class="a" style="left:1377px;top:179px;width:5px;height:3px;background:#4a5a66"></div>
<svg class="a" style="left:1405px;top:175px" width="14" height="12"><path d="M2.5,1.5 L11.5,10.5 M11.5,1.5 L2.5,10.5" stroke="#7a2a1c" stroke-width="3.6"/><path d="M2.5,1.5 L11.5,10.5 M11.5,1.5 L2.5,10.5" stroke="#fff" stroke-width="2"/></svg>
<style>.gb{border:1px solid #8aa4ba;border-radius:3px;background:linear-gradient(#d5e3ef,#bfd3e4 48%,#adc6db 52%,#c3d7e7)}</style>

<div class="a" style="left:317px;top:193px;width:3px;height:530px;background:linear-gradient(90deg,#7f8890,#9aa2a8)"></div><div class="a" style="left:317px;top:192px;width:1109px;height:3px;background:linear-gradient(#868f97,#6f767c)"></div>
<!-- strip under chart -->
<div class="a" style="left:320px;top:722px;width:1105px;height:6px;background:#f4f4f4"></div>
<!-- header band -->
<div class="a" style="left:320px;top:728px;width:1105px;height:19px;background:#c2c2c2;border-top:1px solid #8e8e8e;border-bottom:2px solid #4a4a4a"></div>
<div class="a" style="left:321px;top:729px;width:17px;height:17px;background:#0b0bf2;border:1px solid #3a3aa0"></div>
<div class="th" style="left:338px;top:728px;width:48px">Sweep</div>
<div class="th" style="left:386px;top:728px;width:48px">Trace</div>
<div class="th" style="left:434px;top:728px;width:85px">Color</div>
<div class="th" style="left:519px;top:728px;width:70px">Line Style</div>
<div class="th" style="left:589px;top:728px;width:38px">Thick</div>
<div class="th" style="left:627px;top:728px;width:150px">Data</div>
<div class="th" style="left:777px;top:728px;width:38px">Axis</div>
<div class="th" style="left:815px;top:728px;width:193px">Comment</div>
<div class="a" style="left:1008px;top:729px;width:2px;height:18px;background:#3c3c3c"></div>
<!-- rows bg -->
<div class="a" style="left:320px;top:748px;width:689px;height:46px;background:#e2e2e2"></div>
<div class="a" style="left:320px;top:762px;width:689px;height:1px;background:#cdcdcd"></div>
<div class="a" style="left:320px;top:778px;width:689px;height:1px;background:#cdcdcd"></div>
<div class="a" style="left:320px;top:793px;width:689px;height:1px;background:#d0d0d0"></div>
<div class="a" style="left:338px;top:748px;width:1px;height:46px;background:#d2d2d2"></div>
<div class="a" style="left:386px;top:748px;width:1px;height:46px;background:#d2d2d2"></div>
<div class="a" style="left:434px;top:748px;width:1px;height:46px;background:#d2d2d2"></div>
<div class="a" style="left:777px;top:748px;width:1px;height:46px;background:#d2d2d2"></div>
<div class="a" style="left:815px;top:748px;width:1px;height:46px;background:#d2d2d2"></div>
<!-- row checkboxes -->
<div class="a" style="left:322px;top:749px;width:14px;height:13px;background:#d0d0d0;border:1px solid #b4b4b4"></div>
<svg class="a" style="left:324px;top:751px" width="10" height="10"><path d="M1.5,1.5 L8.5,8.5 M8.5,1.5 L1.5,8.5" stroke="#f4f4f4" stroke-width="2.2"/></svg>
<div class="a" style="left:322px;top:764px;width:14px;height:13px;background:#cfcfcf;border:1px solid #b8b8b8"></div>
<div class="a" style="left:322px;top:779px;width:14px;height:13px;background:#dadada;border:1px solid #9a9a9a"></div>
<svg class="a" style="left:324px;top:781px" width="10" height="10"><path d="M1.5,1.5 L8.5,8.5 M8.5,1.5 L1.5,8.5" stroke="#111" stroke-width="1.8"/></svg>
<!-- rows text -->
<span class="td" style="left:342px;top:748px">1</span><span class="td" style="left:390px;top:748px">1</span><span class="td" style="left:437px;top:747px">Green</span>
<span class="td" style="left:342px;top:763px">1</span><span class="td" style="left:390px;top:763px">3</span><span class="td" style="left:437px;top:762px">Magenta</span>
<span class="td" style="left:342px;top:778px">1</span><span class="td" style="left:390px;top:778px">2</span><span class="td" style="left:437px;top:777px">Yellow</span>
<div class="dd" style="left:507px;top:747px"></div><div class="dd" style="left:507px;top:763px"></div><div class="dd" style="left:507px;top:779px"></div>
<span class="td" style="left:523px;top:747px">Solid</span><span class="td" style="left:523px;top:762px">Solid</span><span class="td" style="left:523px;top:777px">Solid</span>
<div class="dd" style="left:576px;top:747px"></div><div class="dd" style="left:576px;top:763px"></div><div class="dd" style="left:576px;top:779px"></div>
<span class="td" style="left:592px;top:748px">1</span><span class="td" style="left:592px;top:763px">3</span><span class="td" style="left:592px;top:778px">1</span>
<div class="dd" style="left:615px;top:747px"></div><div class="dd" style="left:615px;top:763px"></div><div class="dd" style="left:615px;top:779px"></div>
<span class="td" style="left:630px;top:748px">Anlr.THD+N Ratio</span><span class="td" style="left:630px;top:763px">DSP Anlr.THD+N Ratio A</span><span class="td" style="left:630px;top:778px">Anlr.THD+N Ratio</span>
<span class="td" style="left:781px;top:748px">Left</span><span class="td" style="left:781px;top:763px">Left</span><span class="td" style="left:781px;top:778px">Left</span>
<!-- dark widget -->
<div class="a" style="left:1373px;top:735px;width:54px;height:24px;background:linear-gradient(#6a6a6e,#4c4c50 40%,#46464a);border:1px solid #5e5e62"></div>
<div class="a" style="left:1376px;top:738px;width:8px;height:18px;background-image:radial-gradient(#38383c 1px,transparent 1.2px);background-size:3px 3px"></div>
<div class="a" style="left:1392px;top:745px;width:14px;height:7px;background:#b9b9bb;border:1px solid #8a8a8e"></div>
<div class="a" style="left:1417px;top:741px;width:5px;height:2px;background:#e8e8e8"></div>
<div class="a" style="left:1418px;top:750px;width:0;height:0;border-left:2.5px solid transparent;border-right:2.5px solid transparent;border-top:3px solid #e8e8e8"></div>
<!-- comment -->
<div class="a" style="left:318px;top:799px;width:1108px;height:2px;background:#8c8c8c"></div>
<div class="a" style="left:317px;top:800px;width:2px;height:65px;background:#8a8a8a"></div>
<div class="a cm" style="left:320px;top:802px">DSP required.&nbsp; Simultaneous THD+N measurement can be made by using both the Analog Analyzer and the DSP Audio Analyzer in THD+N mode (see pg 1).&nbsp; Filters choice is</div>
<div class="a cm" style="left:320px;top:817.5px">limited in the DSP Analyzer.&nbsp; Set bandwidth for similar range.</div>
<div class="a cm" style="left:320px;top:833px">At low distortion amplitudes the DSP analyzer is limited by the A-D quantization noise and distortion as can be seen here.</div>
<style>.cm{font-size:12px;font-weight:bold;color:#161616;white-space:nowrap;letter-spacing:0.56px;line-height:15px}</style>
<div class="a" style="left:1410px;top:803px;width:16px;height:58px;background:#f2f2f2;border-left:1px solid #e2e2e2"></div>
<div class="a" style="left:1414px;top:807px;width:0;height:0;border-left:3.5px solid transparent;border-right:3.5px solid transparent;border-bottom:4px solid #9a9a9a"></div>
<div class="a" style="left:1414px;top:851px;width:0;height:0;border-left:3.5px solid transparent;border-right:3.5px solid transparent;border-top:4px solid #8a8a8a"></div>

<div class="a" id="status">
<span class="a" style="left:1px;top:3px;font-size:13px;color:#222;letter-spacing:0.1px">Sweep completed</span>
<div class="tab" style="left:971px;width:47px;font-size:13px;line-height:17px">Page 1</div>
<div class="tab" style="left:1019px;width:47px;font-size:13px;line-height:17px;background:#b2b2b2;color:#333">Page 2</div>
<div class="tab" style="left:1066px;width:47px;font-size:13px;line-height:17px">Page 3</div>
<div class="tab" style="left:1114px;width:45px;font-size:10px;line-height:18px">Page 4</div>
<div class="tab" style="left:1161px;width:46px;font-size:10px;line-height:18px">Page 5</div>
</div>
</body></html>
